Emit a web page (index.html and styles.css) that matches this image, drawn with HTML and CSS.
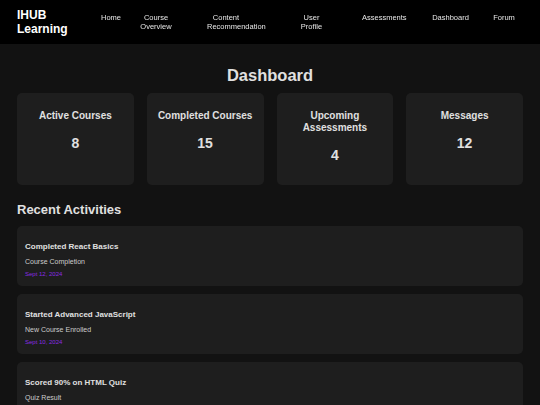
FILE: index.html
```html
<!DOCTYPE html>
<html lang="en">
<head>
    <meta charset="UTF-8">
    <meta name="viewport" content="width=device-width, initial-scale=1.0">
    <title>IHUB Learning - Dashboard</title>
    <link rel="stylesheet" href="styles.css">
</head>
<body>
    <header class="header">
        <div class="logo">IHUB<br>Learning</div>
        <nav>
            <ul class="nav-links">
                <li class="nav-home"><a href="#">Home</a></li>
                <li class="nav-course"><a href="#">Course Overview</a></li>
                <li class="nav-content"><a href="#">Content Recommendation</a></li>
                <li class="nav-profile"><a href="#">User Profile</a></li>
                <li class="nav-assess"><a href="#">Assessments</a></li>
                <li class="nav-dash"><a href="#">Dashboard</a></li>
                <li class="nav-forum"><a href="#">Forum</a></li>
            </ul>
        </nav>
    </header>

    <main class="main">
        <h1>Dashboard</h1>
        <div class="stats">
            <div class="stat-card">
                <h3>Active Courses</h3>
                <p class="stat-number">8</p>
            </div>
            <div class="stat-card">
                <h3>Completed Courses</h3>
                <p class="stat-number">15</p>
            </div>
            <div class="stat-card">
                <h3>Upcoming Assessments</h3>
                <p class="stat-number">4</p>
            </div>
            <div class="stat-card">
                <h3>Messages</h3>
                <p class="stat-number">12</p>
            </div>
        </div>

        <h2>Recent Activities</h2>
        <div class="activities">
            <div class="activity">
                <h4>Completed React Basics</h4>
                <p>Course Completion</p>
                <span class="date">Sept 12, 2024</span>
            </div>
            <div class="activity">
                <h4>Started Advanced JavaScript</h4>
                <p>New Course Enrolled</p>
                <span class="date">Sept 10, 2024</span>
            </div>
            <div class="activity">
                <h4>Scored 90% on HTML Quiz</h4>
                <p>Quiz Result</p>
                <span class="date">Sept 8, 2024</span>
            </div>
        </div>
    </main>
</body>
</html>
```

FILE: styles.css
```css
body {
    font-family: "Liberation Sans", Arial, sans-serif;
    margin: 0;
    background-color: #121212;
    color: #e0e0e0;
}

/* header */
.header {
    display: flex;
    align-items: center;
    height: 44px;
    padding: 0 17px;
    background-color: #000;
}

.logo {
    font-size: 12px;
    font-weight: bold;
    line-height: 14px;
    color: #fff;
}

nav {
    margin-left: 24px;
    will-change: transform;
}

.nav-links {
    display: flex;
    align-items: flex-start;
    list-style: none;
    margin: 0;
    padding: 0;
}

.nav-links li {
    flex: none;
    text-align: center;
    font-size: 7.5px;
    line-height: 9px;
}

.nav-links a {
    display: inline-block;
    vertical-align: top;
    max-width: 38px;
    color: #e6e6e6;
    text-decoration: none;
}

.nav-home { width: 38px; }
.nav-course { width: 52px; }
.nav-content { width: 88px; }
.nav-profile { width: 83px; }
.nav-assess { width: 56px; }
.nav-dash { width: 83px; }
.nav-forum { width: 24px; }

/* main */
.main {
    padding: 22px 17px 20px;
}

h1 {
    margin: 0 0 8px;
    font-size: 16.5px;
    line-height: 19px;
    text-align: center;
    color: #e0e0e0;
}

.stats {
    display: grid;
    grid-template-columns: repeat(4, 1fr);
    gap: 13px;
}

.stat-card {
    background-color: #1e1e1e;
    border-radius: 5px;
    padding: 17px 10px 21px;
    text-align: center;
}

.stat-card h3 {
    margin: 0 0 13px;
    font-size: 10px;
    line-height: 12px;
}

.stat-number {
    margin: 0;
    font-size: 14px;
    line-height: 17px;
    font-weight: bold;
}

h2 {
    margin: 17px 0 9px;
    font-size: 13px;
    line-height: 15px;
}

.activities {
    display: flex;
    flex-direction: column;
    gap: 8px;
}

.activity {
    background-color: #1e1e1e;
    border-radius: 5px;
    padding: 8px;
    height: 44px;
}

.activity h4 {
    margin: 8px 0 5px;
    font-size: 8px;
    line-height: 10px;
}

.activity p {
    margin: 0 0 3.5px;
    font-size: 7px;
    line-height: 9px;
    color: #cccccc;
}

.date {
    display: block;
    font-size: 6px;
    line-height: 8px;
    color: #8a2be2;
}
```
